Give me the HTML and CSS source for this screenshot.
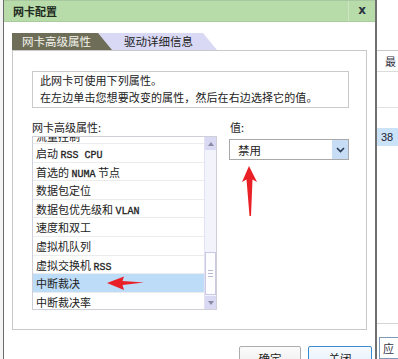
FILE: index.html
```html
<!DOCTYPE html>
<html lang="zh-CN">
<head>
<meta charset="utf-8">
<title>网卡配置</title>
<link rel="stylesheet" href="styles.css">
</head>
<body>
<div class="screen">
  <div class="bg-left"></div>
  <div class="dialog">
    <div class="titlebar">
      <span class="title">网卡配置</span>
      <span class="close">x</span>
    </div>
    <div class="tabs">
      <div class="tab tab-active">网卡高级属性</div>
      <div class="tab tab-inactive">驱动详细信息</div>
    </div>
    <div class="panel">
      <div class="desc">
        <p>此网卡可使用下列属性。</p>
        <p>在左边单击您想要改变的属性，然后在右边选择它的值。</p>
      </div>
      <div class="cols">
        <div class="col-left">
          <div class="label">网卡高级属性:</div>
          <div class="listbox">
            <div class="list-area">
              <div class="list-inner">
                <div class="row row-cut">流量控制</div>
                <div class="row">启动 <span class="lat">RSS CPU</span></div>
                <div class="row">首选的 <span class="lat">NUMA</span> 节点</div>
                <div class="row">数据包定位</div>
                <div class="row">数据包优先级和 <span class="lat">VLAN</span></div>
                <div class="row">速度和双工</div>
                <div class="row">虚拟机队列</div>
                <div class="row">虚拟交换机 <span class="lat">RSS</span></div>
                <div class="row row-selected">中断裁决</div>
                <div class="row">中断裁决率</div>
              </div>
            </div>
            <div class="scrollbar">
              <div class="sb-btn"><span class="tri-up"></span></div>
              <div class="sb-track"></div>
              <div class="sb-thumb"><span class="grip"></span><span class="grip"></span><span class="grip"></span></div>
              <div class="sb-btn"><span class="tri-down"></span></div>
            </div>
          </div>
        </div>
        <div class="col-right">
          <div class="label">值:</div>
          <div class="select">
            <span class="select-text">禁用</span>
            <span class="select-btn">
              <svg width="9" height="6" viewBox="0 0 9 6"><path d="M1 1 L4.5 4.5 L8 1" fill="none" stroke="#2a3a55" stroke-width="1.6"/></svg>
            </span>
          </div>
        </div>
      </div>
    </div>
    <div class="buttons">
      <div class="btn">确定</div>
      <div class="btn btn-primary">关闭</div>
    </div>
  </div>
  <div class="bg-right">
    <div class="bg-head">最</div>
    <div class="bg-row"></div>
    <div class="bg-gap"></div>
    <div class="bg-sel">38</div>
    <div class="bg-fill"></div>
    <div class="bg-btn">应</div>
  </div>
  <svg class="annot" width="398" height="359" viewBox="0 0 398 359">
    <polygon points="249,166 257,182 252.5,179.5 251,216 249.5,216 246.5,179.5 242,182" fill="#ea2027"/>
    <polygon points="107,283 124,276.5 122.5,281 144,282.5 122.5,285 124,290" fill="#ea2027"/>
  </svg>
</div>
</body>
</html>
```
FILE: styles.css
```css
* { box-sizing: border-box; }
html, body { margin: 0; padding: 0; background: #fff; }
body {
  font-family: "Noto Sans CJK SC", "Noto Sans", sans-serif;
  font-size: 11px;
  color: #222;
}
p { margin: 0; }

.screen {
  position: relative;
  width: 398px;
  height: 359px;
  overflow: hidden;
  display: flex;
}

.bg-left {
  width: 3px;
  flex-shrink: 0;
  background: #f4f4f4;
}

.dialog {
  width: 374px;
  flex-shrink: 0;
  height: 359px;
  overflow: hidden;
  background: #fff;
  border-left: 1px solid #6b6b6b;
  border-right: 2px solid #707070;
  display: flex;
  flex-direction: column;
}
.dialog > * { flex-shrink: 0; }

.titlebar {
  height: 22px;
  background: #b7dba9;
  border-top: 1px solid #a9c8a0;
  border-bottom: 1px solid #a8cc9c;
  display: flex;
  align-items: center;
}
.title {
  flex: 1;
  padding-left: 9px;
  font-weight: bold;
  font-size: 11px;
  color: #1e2a1e;
}
.close {
  width: 27px;
  height: 100%;
  border-left: 1px solid #cfe6c6;
  display: flex;
  align-items: center;
  justify-content: center;
  font-family: "DejaVu Sans", sans-serif;
  font-weight: bold;
  font-size: 12px;
  color: #2a3440;
  padding-bottom: 2px;
}

.tabs {
  margin: 11px 0 0 8px;
  height: 17px;
  display: flex;
}
.tab {
  height: 17px;
  line-height: 17px;
  font-size: 11.5px;
}
.tab-active {
  position: relative;
  z-index: 2;
  width: 100px;
  padding-left: 10px;
  background: #6e6e58;
  color: #f4f4ee;
  clip-path: polygon(0 0, 86px 0, 100px 100%, 0 100%);
}
.tab-inactive {
  position: relative;
  z-index: 1;
  width: 121px;
  margin-left: -16px;
  padding-left: 28px;
  background: #d9d9f6;
  color: #222;
  clip-path: polygon(0 0, 107px 0, 121px 100%, 0 100%);
}

.panel {
  margin: 0 8px;
  height: 280px;
  border: 1px solid #c9c9c9;
  padding: 20px 0 0 19px;
}

.desc {
  width: 317px;
  height: 37px;
  border: 1px solid #cacaca;
  padding: 0 0 0 7px;
  line-height: 17px;
  letter-spacing: 0.1px;
}

.cols {
  display: flex;
  margin-top: 12px;
}
.col-left { width: 185px; }
.col-right { margin-left: 12px; width: 120px; }

.label {
  height: 14px;
  line-height: 14px;
  margin-bottom: 2px;
}
.col-right .label { margin-bottom: 5px; padding-left: 1px; }

.listbox {
  height: 174px;
  border: 1px solid #cfcfda;
  display: flex;
}
.list-area {
  flex: 1;
  overflow: hidden;
}
.list-inner { margin-top: -11.6px; }
.row {
  height: 18.6px;
  line-height: 18px;
  padding-left: 3px;
  border-bottom: 1px solid #ececec;
  white-space: nowrap;
}
.row-cut { line-height: 22px; overflow: hidden; }
.row-selected { background: #bddcf8; }
.lat {
  font-family: "Liberation Mono", monospace;
  font-size: 10px;
  color: #222;
  -webkit-text-stroke: 0.3px #222;
}

.scrollbar {
  width: 12px;
  display: flex;
  flex-direction: column;
  background: #f3f3fb;
  border-left: 1px solid #e2e2f2;
}
.sb-btn {
  height: 13px;
  background: #d9d9f3;
  display: flex;
  align-items: center;
  justify-content: center;
}
.sb-track { flex: 1; }
.sb-thumb {
  height: 43px;
  background: #fdfdff;
  border: 1px solid #c9c9e6;
  display: flex;
  flex-direction: column;
  align-items: center;
  justify-content: center;
  gap: 2px;
  margin-bottom: 1px;
}
.grip {
  width: 5px;
  height: 1px;
  background: #b8b8d0;
}
.tri-up {
  width: 0; height: 0;
  border-left: 3.5px solid transparent;
  border-right: 3.5px solid transparent;
  border-bottom: 4px solid #8b8ba8;
}
.tri-down {
  width: 0; height: 0;
  border-left: 3.5px solid transparent;
  border-right: 3.5px solid transparent;
  border-top: 4px solid #8b8ba8;
}

.select {
  width: 120px;
  height: 21px;
  border: 1px solid #a9a9a9;
  display: flex;
  align-items: center;
}
.select-text {
  flex: 1;
  padding-left: 8px;
  font-size: 11.5px;
}
.select-btn {
  width: 16px;
  height: 100%;
  background: #c7ddf5;
  display: flex;
  align-items: center;
  justify-content: center;
}

.buttons {
  margin-top: 16px;
  display: flex;
  justify-content: flex-end;
  gap: 7px;
  padding-right: 3px;
}
.btn {
  width: 62px;
  height: 24px;
  border: 1px solid #acacac;
  border-radius: 2px;
  background: linear-gradient(#fbfbfb, #ececec);
  text-align: center;
  line-height: 22px;
  font-size: 11.5px;
}
.btn-primary {
  width: 64px;
  border-color: #3c8ad0;
  background: linear-gradient(#f5faff, #e3eefa);
}

.bg-right {
  flex: 1;
  display: flex;
  flex-direction: column;
  padding-top: 50px;
  background: #fff;
  color: #334;
}
.bg-right > * { flex-shrink: 0; }
.bg-head {
  height: 22px;
  border-top: 1px solid #c8c8c8;
  border-bottom: 1px solid #dcdcdc;
  line-height: 20px;
  padding-left: 8px;
}
.bg-row {
  height: 36px;
  border-bottom: 1px solid #e2e2e2;
}
.bg-gap { height: 20px; }
.bg-sel {
  height: 18px;
  line-height: 18px;
  background: #cbe3f8;
  padding-left: 4px;
  font-family: "Liberation Sans", sans-serif;
  font-size: 11px;
  color: #223;
}
.bg-fill {
  flex: 1 1 auto;
  flex-shrink: 1;
  border-bottom: 1px solid #d4d4d4;
  margin-bottom: 13px;
}
.bg-btn {
  height: 22px;
  margin-left: 2px;
  border: 1px solid #7d9ab8;
  border-right: none;
  padding-left: 3px;
  line-height: 20px;
}

.annot {
  position: absolute;
  left: 0;
  top: 0;
  pointer-events: none;
}
```
